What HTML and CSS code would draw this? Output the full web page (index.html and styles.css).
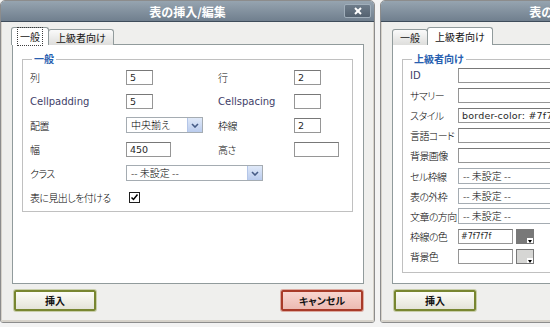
FILE: index.html
```html
<!DOCTYPE html>
<html lang="ja">
<head>
	<meta charset="utf-8">
	<title>表の挿入/編集</title>
	<link rel="stylesheet" href="styles.css">
</head>
<body>

	<!-- general tab -->
	<section class="dialog">
		<header class="titlebar">
			<span class="title">表の挿入/編集</span>
			<span class="closeButton">
				<svg viewBox="0 0 10 10" width="10" height="10"><line x1="2" y1="2" x2="8" y2="8"/><line x1="8" y1="2" x2="2" y2="8"/></svg>
			</span>
		</header>
		<div class="dialogBody">
			<nav class="tabs">
				<span class="tab tab_active"><span class="tab_focus">一般</span></span>
				<span class="tab">上級者向け</span>
			</nav>
			<section class="panel">
				<fieldset class="group">
					<legend>一般</legend>
					<div class="grid grid_general">
						<label>列</label>
						<span class="input input_small">5</span>
						<label>行</label>
						<span class="input input_small">2</span>

						<label class="latin">Cellpadding</label>
						<span class="input input_small">5</span>
						<label class="latin">Cellspacing</label>
						<span class="input input_small"></span>

						<label>配置</label>
						<span class="select select_align"><span class="select_text">中央揃え</span><span class="select_arrow"><svg viewBox="0 0 8 5" width="8" height="5"><path d="M1 1 L4 4 L7 1"/></svg></span></span>
						<label>枠線</label>
						<span class="input input_small">2</span>

						<label>幅</label>
						<span class="input input_medium">450</span>
						<label>高さ</label>
						<span class="input input_medium"></span>

						<label>クラス</label>
						<span class="select select_class span3"><span class="select_text">-- 未設定 --</span><span class="select_arrow"><svg viewBox="0 0 8 5" width="8" height="5"><path d="M1 1 L4 4 L7 1"/></svg></span></span>

						<label>表に見出しを付ける</label>
						<span class="checkbox"><svg viewBox="0 0 9 9" width="9" height="9"><path d="M1.5 4.5 L3.5 6.5 L7.5 1.5"/></svg></span>
					</div>
				</fieldset>
			</section>
			<div class="buttons">
				<span class="button button_insert">挿入</span>
				<span class="button button_cancel">キャンセル</span>
			</div>
		</div>
	</section>

	<!-- advanced tab -->
	<section class="dialog">
		<header class="titlebar">
			<span class="title">表の挿入/編集</span>
			<span class="closeButton">
				<svg viewBox="0 0 10 10" width="10" height="10"><line x1="2" y1="2" x2="8" y2="8"/><line x1="8" y1="2" x2="2" y2="8"/></svg>
			</span>
		</header>
		<div class="dialogBody">
			<nav class="tabs">
				<span class="tab">一般</span>
				<span class="tab tab_active">上級者向け</span>
			</nav>
			<section class="panel">
				<fieldset class="group group_advanced">
					<legend>上級者向け</legend>
					<div class="grid grid_advanced">
						<label class="latin">ID</label>
						<span class="input input_wide"></span>
						<label>サマリー</label>
						<span class="input input_wide"></span>
						<label>スタイル</label>
						<span class="input input_wide input_code">border-color: #7f7f7f;</span>
						<label>言語コード</label>
						<span class="input input_wide"></span>
						<label>背景画像</label>
						<span class="input input_wide"></span>
						<label>セル枠線</label>
						<span class="select select_wide"><span class="select_text">-- 未設定 --</span></span>
						<label>表の外枠</label>
						<span class="select select_wide"><span class="select_text">-- 未設定 --</span></span>
						<label>文章の方向</label>
						<span class="select select_wide"><span class="select_text">-- 未設定 --</span></span>
						<label>枠線の色</label>
						<span class="colorRow"><span class="input input_color">#7f7f7f</span><span class="picker picker_dark"><i></i></span></span>
						<label>背景色</label>
						<span class="colorRow"><span class="input input_color"></span><span class="picker"><i></i></span></span>
					</div>
				</fieldset>
			</section>
			<div class="buttons">
				<span class="button button_insert">挿入</span>
				<span class="button button_cancel">キャンセル</span>
			</div>
		</div>
	</section>

</body>
</html>
```

FILE: styles.css
```css
html, body{ margin:0; }
body{
	width:550px; height:327px; overflow:hidden;
	display:flex; gap:5px;
	background-color:rgb(243,243,243);
	font-family:"Noto Sans CJK JP",sans-serif;
	font-size:10px; color:rgb(20,20,20);
	font-feature-settings:"palt";
}

.dialog{
	flex:0 0 375px; height:323px;
	box-sizing:border-box;
	display:flex; flex-direction:column;
	border:1px solid rgb(140,140,140);
	border-radius:5px 5px 3px 3px;
	background-color:rgb(239,239,237);
	overflow:hidden;
}

.titlebar{
	height:20px; flex:0 0 20px;
	display:grid; grid-template-columns:1fr auto 1fr; align-items:center;
	background:linear-gradient(rgb(150,164,176),rgb(112,127,142));
	border-bottom:1px solid rgb(62,76,90);
}
.title{ grid-column:2; color:#fff; font-weight:bold; font-size:12px; font-feature-settings:normal; }
.closeButton{
	grid-column:3; justify-self:end; margin-right:3px;
	width:25px; height:12px;
	display:flex; align-items:center; justify-content:center;
	background:linear-gradient(rgb(110,124,138),rgb(84,98,112));
	border:1px solid rgb(160,174,186); border-radius:2px;
}
.closeButton svg{ stroke:#fff; stroke-width:2; }

.dialogBody{
	flex:1;
	padding:0 9px 0 10px;
	border-left:1px solid rgb(214,210,202);
	border-right:1px solid rgb(214,210,202);
	border-bottom:2px solid rgb(214,210,202);
}

.tabs{ display:flex; align-items:flex-end; height:18px; margin-top:5px; margin-bottom:-1px; }
.tab{
	height:15px; box-sizing:content-box;
	padding:0 7px; line-height:15px;
	border:1px solid rgb(145,155,156); border-bottom:none;
	border-radius:3px 3px 0 0;
	background:linear-gradient(rgb(250,250,250),rgb(222,222,220));
	white-space:nowrap;
}
.tab_active{
	position:relative; z-index:1;
	height:17px; line-height:17px;
	margin:0 -1px;
	background:#fff;
}
.tab_focus{ outline:1px dotted rgb(60,60,60); outline-offset:1px; padding:0 1px; }

.panel{
	height:240px; box-sizing:border-box;
	background:#fff;
	border:1px solid rgb(145,155,156);
	padding:8px 10px 0 9px;
}

.group{
	margin:0; padding:0 7px 2px 7px;
	border:1px solid rgb(192,192,192);
}
.group legend{
	margin-left:2px; padding:0 2px;
	color:rgb(40,96,176); font-weight:bold; line-height:12px;
}

.grid{ display:grid; align-items:center; }
.grid label{ white-space:nowrap; font-weight:300; color:#000; letter-spacing:-0.6px; }
.grid label.latin{ font-family:"DejaVu Sans",sans-serif; font-size:10px; font-weight:normal; letter-spacing:0; color:rgb(62,62,104); }
.grid_general{ grid-template-columns:96px 92px 76px 1fr; grid-auto-rows:24px; }
.grid_advanced{ grid-template-columns:48px 1fr; grid-auto-rows:20.2px; padding-bottom:3px; }
.span3{ grid-column:span 3; }

.input{
	display:block; height:15px; box-sizing:border-box;
	border:1px solid rgb(150,150,150); border-top-color:rgb(120,120,120);
	background:#fff; padding:0 3px; line-height:13px;
	font-family:"DejaVu Sans",sans-serif; font-size:9.5px; color:rgb(40,40,40);
	white-space:nowrap; overflow:hidden;
}
.input_small{ width:27px; }
.input_medium{ width:45px; }
.input_wide{ width:220px; }
.input_code{ font-size:9.5px; letter-spacing:0.2px; }
.input_color{ width:55px; font-size:8px; padding:0 2px; }

.select{
	display:flex; height:16px; box-sizing:border-box;
	border:1px solid rgb(165,172,178); background:#fff;
}
.select_text{ flex:1; padding-left:4px; line-height:14px; font-weight:300; color:#000; white-space:nowrap; }
.select_arrow{
	width:14px; margin:0;
	display:flex; align-items:center; justify-content:center;
	background:linear-gradient(rgb(224,233,248),rgb(186,204,238));
	border-left:1px solid rgb(180,198,232);
}
.select_arrow svg{ fill:none; stroke:rgb(70,92,134); stroke-width:1.6; }
.select_align{ width:77px; }
.select_class{ width:137px; }
.select_wide{ width:180px; }

.checkbox{
	width:11px; height:11px; box-sizing:border-box; margin-left:3px;
	border:1px solid rgb(30,30,30); background:#fff;
	display:flex; align-items:center; justify-content:center;
}
.checkbox svg{ fill:none; stroke:#000; stroke-width:1.5; }

.colorRow{ display:flex; gap:3px; align-items:center; }
.picker{
	width:18px; height:15px; box-sizing:border-box;
	border:1px solid rgb(120,120,120);
	background:rgb(214,214,212);
	display:flex; align-items:flex-end; justify-content:flex-end;
}
.picker_dark{ background:rgb(120,120,120); }
.picker i{
	width:6px; height:5px; background:#fff;
	display:flex; align-items:center; justify-content:center;
}
.picker i::after{ content:""; border:2px solid transparent; border-top:3px solid #000; margin-top:3px; }

.buttons{ display:flex; justify-content:space-between; margin-top:6px; padding:0 1px 0 2px; }
.button{
	width:82px; height:21px; box-sizing:border-box;
	display:flex; align-items:center; justify-content:center;
	border:2px solid; border-radius:2px;
	font-weight:bold;
}
.button_insert{
	border-color:rgb(120,134,48);
	background:linear-gradient(rgb(252,252,246),rgb(228,228,216));
	box-shadow:0 0 0 1px rgb(200,206,170);
}
.button_cancel{
	border-color:rgb(168,58,40);
	background:linear-gradient(rgb(248,214,208),rgb(236,186,178));
	box-shadow:0 0 0 1px rgb(220,170,160);
}
```
